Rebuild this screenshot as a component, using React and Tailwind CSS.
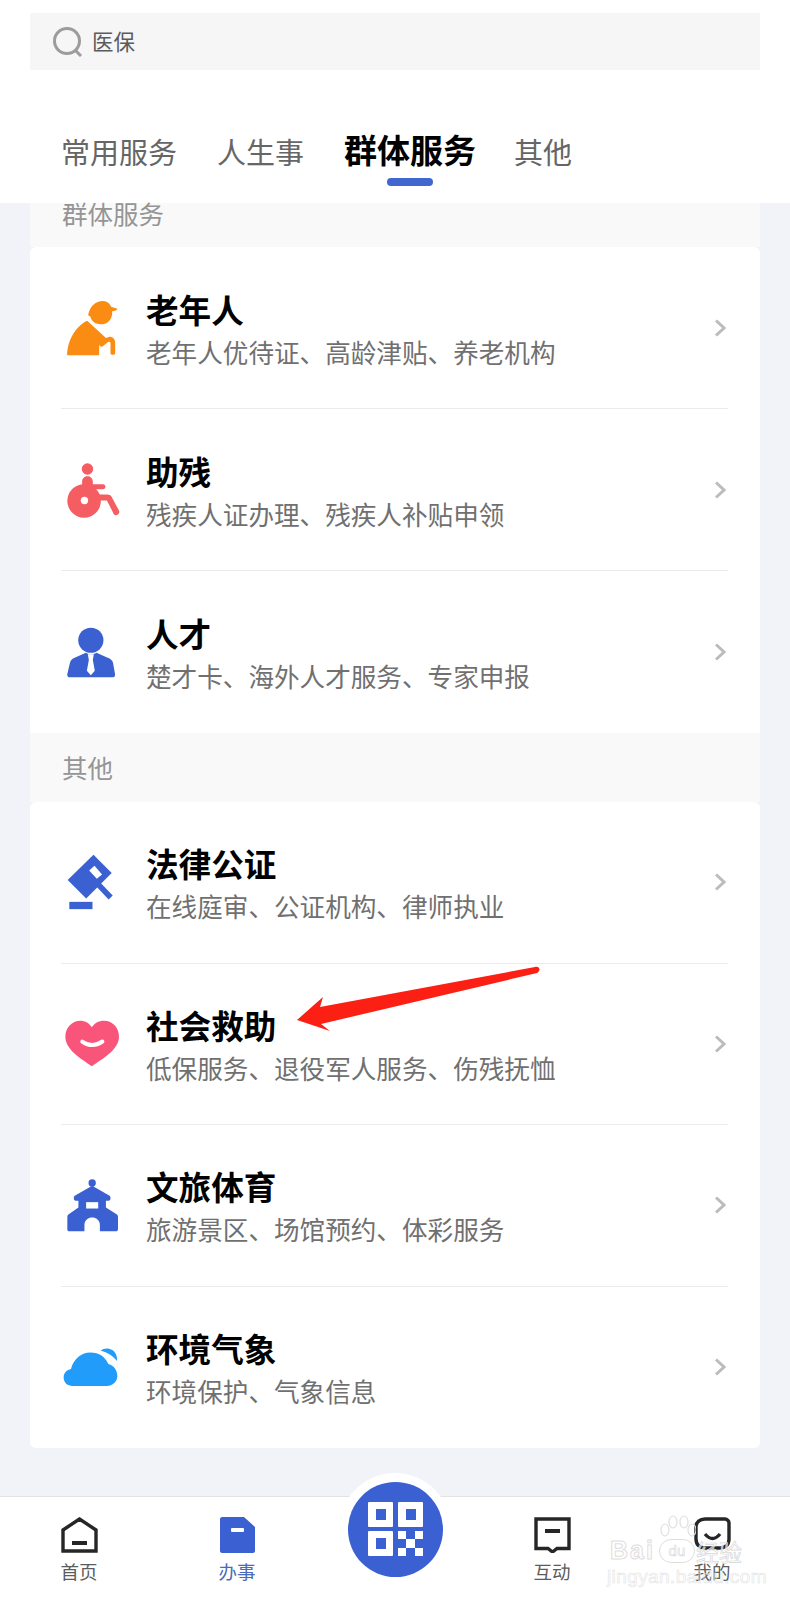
import React from 'react';

const BLUE = '#3a60d2';

const ElderIcon = () => (
  <svg viewBox="80 62 155 168" className="w-[52px] h-[56px] mt-[1px]">
    <path d="M143 108C146 92 152 76 172 68C188 62 204 66 212 82L231 88C230 93 222 95 215 96C217 118 203 135 184 135C165 135 152 125 150 112Z" fill="#fb8c13" />
    <path d="M80 228C80 185 105 140 140 124L190 170L196 176L207 172C218 172 224 180 224 190L224 222C224 228 210 228 210 222L210 192C210 186 204 186 200 190L188 200C182 205 176 200 176 195L176 228Z" fill="#fb8c13" />
  </svg>
);

const WheelchairIcon = () => (
  <svg viewBox="80 548 158 164" className="w-[53px] h-[55px] mt-[1px]">
    <g fill="#f45e63">
      <circle cx="141" cy="566" r="17" />
      <circle cx="131" cy="661" r="50" />
      <path d="M125 640L125 604C125 582 157 582 157 604L157 611L187 611C197 611 197 626 187 626L157 626L157 642L200 642C206 642 210 644 213 649L235 690C240 701 225 709 219 699L199 660L150 660Z" />
    </g>
    <circle cx="132" cy="660" r="11" fill="#fff" />
  </svg>
);

const PersonIcon = () => (
  <svg viewBox="84 1040 146 154" className="w-[49px] h-[51px]">
    <circle cx="155" cy="1080" r="38" fill={BLUE} />
    <path d="M84 1182L92 1148C94 1140 100 1136 106 1133L140 1118C150 1125 162 1125 172 1118L206 1133C214 1136 220 1141 222 1148L228 1182C229 1188 226 1192 220 1192L92 1192C86 1192 83 1188 84 1182Z" fill={BLUE} />
    <path d="M146 1122L164 1122L161 1140L167 1172L155 1186L143 1172L149 1140Z" fill="#fff" />
  </svg>
);

const GavelIcon = () => (
  <svg viewBox="80 70 142 168" className="w-[47px] h-[56px]">
    <path d="M160 72L215 127L138 204L82 148Z" fill={BLUE} />
    <path d="M147 119L163 105L186 131L170 144Z" fill="#fff" />
    <path d="M172 159L212 201" stroke={BLUE} strokeWidth="17" fill="none" />
    <rect x="87" y="214" width="70" height="22" fill={BLUE} />
  </svg>
);

const HeartIcon = () => (
  <svg viewBox="75 570 164 142" className="w-[55px] h-[47px] -ml-[2px]">
    <path d="M155 710C120 685 75 660 75 620C75 590 98 572 120 572C135 572 148 580 155 592C162 580 175 572 192 572C215 572 237 590 237 620C237 660 190 685 155 710Z" fill="#f9557a" />
    <path d="M126 635Q156 656 187 635" stroke="#fff" strokeWidth="12" strokeLinecap="round" fill="none" />
  </svg>
);

const TempleIcon = () => (
  <svg viewBox="80 58 152 158" className="w-[51px] h-[53px]">
    <circle cx="155" cy="70" r="11" fill={BLUE} />
    <path d="M155 78L207 108C211 112 211 122 204 123L196 123L196 143L229 164C231 166 232 168 232 171L232 208C232 212 229 214 225 214L178 214L178 195C178 165 132 165 132 195L132 214L87 214C83 214 81 212 81 208L81 171C81 168 82 166 84 164L114 143L114 123L106 123C99 122 99 112 103 108Z" fill={BLUE} />
    <rect x="137" y="127" width="36" height="19" fill="#fff" />
  </svg>
);

const CloudIcon = () => (
  <svg viewBox="68 562 166 118" className="w-[55px] h-[40px] -ml-[4px]">
    <path d="M95 678C78 678 70 665 70 653C70 638 80 630 92 627C100 595 125 577 150 577C178 577 195 590 205 612C222 617 232 632 232 648C232 665 218 678 200 678Z" fill="#219cfa" />
    <path d="M182 572C190 564 205 562 217 570C228 578 232 590 231 603C222 590 205 578 182 572Z" fill="#219cfa" />
  </svg>
);

const groupRows = [
  { icon: ElderIcon, title: '老年人', desc: '老年人优待证、高龄津贴、养老机构' },
  { icon: WheelchairIcon, title: '助残', desc: '残疾人证办理、残疾人补贴申领' },
  { icon: PersonIcon, title: '人才', desc: '楚才卡、海外人才服务、专家申报' },
];

const otherRows = [
  { icon: GavelIcon, title: '法律公证', desc: '在线庭审、公证机构、律师执业' },
  { icon: HeartIcon, title: '社会救助', desc: '低保服务、退役军人服务、伤残抚恤' },
  { icon: TempleIcon, title: '文旅体育', desc: '旅游景区、场馆预约、体彩服务' },
  { icon: CloudIcon, title: '环境气象', desc: '环境保护、气象信息' },
];

const ServiceRow = ({ row, last, tall }) => {
  const Icon = row.icon;
  return (
    <div className={`flex items-center ${tall ? 'h-[162px]' : 'h-[161.5px]'} ${last ? '' : 'border-b border-[#ebebeb]'}`}>
      <div className="w-[85px] shrink-0 flex pl-[6px]">
        <Icon />
      </div>
      <div className={`flex-1 self-start ${tall ? 'pt-[42px]' : 'pt-[41px]'}`}>
        <div className="text-[32.6px] leading-[40px] font-bold text-black">{row.title}</div>
        <div className="text-[25.6px] leading-[45px] text-[#707070]">{row.desc}</div>
      </div>
      {/* chevron */}
      <svg viewBox="0 0 12 18" className="w-[12px] h-[18px] mr-[2px]">
        <path d="M2 1.5L10 9L2 16.5" fill="none" stroke="#bcbcbc" strokeWidth="3" />
      </svg>
    </div>
  );
};

const NavItem = ({ label, active, children }) => (
  <div className="w-[80px] flex flex-col items-center">
    <div className="h-[36px] flex items-center">{children}</div>
    <span className={`mt-[6px] text-[18.5px] leading-[24px] ${active ? 'text-[#4a6bb8]' : 'text-[#5c5c5c]'}`}>{label}</span>
  </div>
);

export default function App() {
  return (
    <div className="relative w-[790px] h-[1600px] overflow-hidden flex flex-col bg-[#f1f3f8] font-['Noto_Sans_CJK_SC','Liberation_Sans',sans-serif]">
      {/* Search and tabs */}
      <header className="h-[203px] shrink-0 bg-white px-[30px] pt-[13px]">
        <div className="h-[57px] bg-[#f6f6f6] flex items-center pl-[23px]">
          <svg viewBox="0 0 30 30" className="w-[30px] h-[30px]">
            <circle cx="14" cy="14" r="12.5" stroke="#9c9c9c" strokeWidth="3" fill="none" />
            <path d="M23 24L28 29" stroke="#9c9c9c" strokeWidth="3" fill="none" />
          </svg>
          <span className="ml-[9px] text-[21.5px] text-[#5c5c5c]">医保</span>
        </div>
        <div className="flex items-start gap-[40px] pl-[33px] mt-[58px]">
          <span className="-ml-[2px] text-[29px] leading-[46px] text-[#666666]">常用服务</span>
          <span className="text-[29px] leading-[46px] text-[#666666]">人生事</span>
          <div className="flex flex-col items-center -mt-[2px]">
            <span className="text-[33px] leading-[46px] font-bold text-black">群体服务</span>
            <div className="w-[46px] h-[8px] rounded-full bg-[#4166cf] mt-[6px]" />
          </div>
          <span className="-ml-[2px] text-[29px] leading-[46px] text-[#666666]">其他</span>
        </div>
      </header>

      {/* Lists */}
      <main className="flex-1 px-[30px]">
        <div className="h-[44px] bg-[#f9f9fa] pl-[32px] text-[25.5px] leading-[20px] text-[#959595]">群体服务</div>
        <div className="bg-white rounded-t-[6px] pl-[31px] pr-[32px]">
          {groupRows.map((row, i) => (
            <ServiceRow key={row.title} row={row} tall last={i === groupRows.length - 1} />
          ))}
        </div>
        <div className="h-[69px] bg-[#f9f9fa] pl-[32px] flex items-center text-[25.5px] text-[#959595]">其他</div>
        <div className="bg-white rounded-[6px] pl-[31px] pr-[32px]">
          {otherRows.map((row, i) => (
            <ServiceRow key={row.title} row={row} last={i === otherRows.length - 1} />
          ))}
        </div>
      </main>

      {/* Bottom nav */}
      <nav className="h-[104px] shrink-0 bg-white border-t border-[#e3e3e3] flex pt-[20px] pl-[39px]">
        <NavItem label="首页">
          <svg viewBox="0 0 37 36" className="w-[37px] h-[36px]">
            <path d="M2 34V13L18.5 2L35 13V34Z" fill="none" stroke="#262626" strokeWidth="3.4" />
            <rect x="11" y="24" width="15" height="4" fill="#262626" />
          </svg>
        </NavItem>
        <div className="ml-[78px]">
          <NavItem label="办事" active>
            <svg viewBox="0 0 35 36" className="w-[35px] h-[36px]">
              <path d="M2 0H24L35 10V34C35 35 34 36 33 36H2C1 36 0 35 0 34V2C0 1 1 0 2 0Z" fill={BLUE} />
              <rect x="11" y="11" width="13" height="4" rx="1" fill="#fff" />
            </svg>
          </NavItem>
        </div>
        <div className="ml-[235px]">
          <NavItem label="互动">
            <svg viewBox="0 0 37 36" className="w-[37px] h-[36px]">
              <path d="M2 2H35V31.5H23L18.5 35L14 31.5H2Z" fill="none" stroke="#262626" strokeWidth="3.4" />
              <rect x="11" y="12" width="15" height="4" fill="#262626" />
            </svg>
          </NavItem>
        </div>
        <div className="ml-[80px]">
          <NavItem label="我的">
            <svg viewBox="0 0 37 36" className="w-[37px] h-[36px]">
              <path d="M2 10C2 5 6 2 11 2H31C33 2 35 4 35 6V22C35 28 31 31 26 31H11C6 31 2 28 2 22Z" fill="none" stroke="#262626" strokeWidth="3.4" />
              <path d="M11 17Q18.5 26 26 17" fill="none" stroke="#262626" strokeWidth="3.4" />
            </svg>
          </NavItem>
        </div>
      </nav>

      {/* QR button sits over the nav */}
      <div className="absolute left-[339px] top-[1473px] w-[112px] h-[112px] rounded-full bg-white flex items-center justify-center">
        <div className="w-[95px] h-[95px] rounded-full bg-[#3a60d2] flex items-center justify-center">
          <svg viewBox="0 0 55 54" className="w-[55px] h-[54px]">
            <rect x="0" y="0" width="25" height="25" rx="1" fill="#fff" />
            <rect x="8" y="7" width="10" height="11" fill="#3a60d2" />
            <rect x="30" y="0" width="25" height="25" rx="1" fill="#fff" />
            <rect x="38" y="7" width="10" height="11" fill="#3a60d2" />
            <rect x="0" y="29" width="25" height="25" rx="1" fill="#fff" />
            <rect x="8" y="36" width="10" height="11" fill="#3a60d2" />
            <g fill="#fff">
              <rect x="30" y="29" width="8" height="8" />
              <rect x="47" y="29" width="8" height="8" />
              <rect x="38" y="37" width="9" height="9" />
              <rect x="30" y="46" width="8" height="8" />
              <rect x="47" y="46" width="8" height="8" />
            </g>
          </svg>
        </div>
      </div>

      {/* Red annotation arrow */}
      <svg viewBox="0 0 790 1600" className="absolute inset-0 w-[790px] h-[1600px] pointer-events-none">
        <path d="M297 1020L323 997L320 1007L535 967C540 966 541 971 537 973L321 1024L330 1031Z" fill="#fb2013" />
      </svg>

      {/* Baidu watermark */}
      <div className="absolute left-[607px] top-[1515px] w-[142px] flex flex-col pointer-events-none font-['Liberation_Sans',sans-serif]">
        <svg viewBox="0 0 36 24" className="ml-[53px] w-[36px] h-[24px]">
          <g fill="none" stroke="#e0e0e0" strokeWidth="1.2">
            <ellipse cx="5" cy="15" rx="4" ry="6" />
            <ellipse cx="13" cy="7" rx="4" ry="6" />
            <ellipse cx="24" cy="7" rx="4" ry="6" />
            <ellipse cx="32" cy="15" rx="4" ry="6" />
          </g>
        </svg>
        <div className="flex items-center h-[24px] pl-[3px]">
          <span className="text-[25px] tracking-[2px] font-bold text-transparent [-webkit-text-stroke:1px_#dedede]">Bai</span>
          <span className="ml-[4px] w-[36px] h-[24px] rounded-full border border-[#dedede] flex items-center justify-center text-[15px] text-transparent [-webkit-text-stroke:0.6px_#d8d8d8]">du</span>
          <span className="ml-[1px] text-[23px] font-['Noto_Sans_CJK_SC',sans-serif] text-white/60 [-webkit-text-stroke:0.7px_#d8d8d8]">经验</span>
        </div>
        <div className="mt-[3px] text-[19px] leading-[22px] tracking-[0.4px] text-transparent [-webkit-text-stroke:0.6px_#e4e4e4]">jingyan.baidu.com</div>
      </div>
    </div>
  );
}
